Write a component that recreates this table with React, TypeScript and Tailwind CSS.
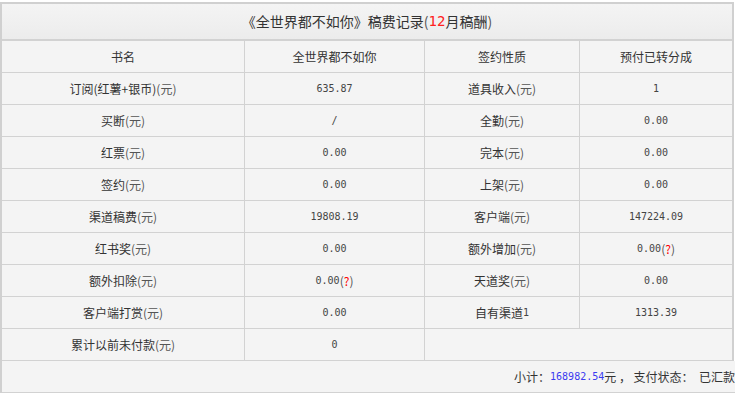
import React from 'react';

const cjk = '"Noto Sans CJK SC", "Microsoft YaHei", sans-serif';
const mono = '"DejaVu Sans Mono", "Liberation Mono", monospace';

type Cell = { text: React.ReactNode };

const Num: React.FC<{ children: React.ReactNode; blue?: boolean }> = ({ children, blue }) => (
  <span className={`text-[10px] ${blue ? 'text-[#3a3af0]' : 'text-[#444]'}`} style={{ fontFamily: mono }}>
    {children}
  </span>
);

const Yuan = () => <span className="text-[#555]">(元)</span>;
const Ask = () => (
  <span className="text-[#555]">
    (<span className="text-[#ff0000]">?</span>)
  </span>
);

const rows: Cell[][] = [
  [{ text: <>订阅(红薯+银币)<Yuan /></> }, { text: <Num>635.87</Num> }, { text: <>道具收入<Yuan /></> }, { text: <Num>1</Num> }],
  [{ text: <>买断<Yuan /></> }, { text: <Num>/</Num> }, { text: <>全勤<Yuan /></> }, { text: <Num>0.00</Num> }],
  [{ text: <>红票<Yuan /></> }, { text: <Num>0.00</Num> }, { text: <>完本<Yuan /></> }, { text: <Num>0.00</Num> }],
  [{ text: <>签约<Yuan /></> }, { text: <Num>0.00</Num> }, { text: <>上架<Yuan /></> }, { text: <Num>0.00</Num> }],
  [{ text: <>渠道稿费<Yuan /></> }, { text: <Num>19808.19</Num> }, { text: <>客户端<Yuan /></> }, { text: <Num>147224.09</Num> }],
  [{ text: <>红书奖<Yuan /></> }, { text: <Num>0.00</Num> }, { text: <>额外增加<Yuan /></> }, { text: <><Num>0.00</Num><Ask /></> }],
  [{ text: <>额外扣除<Yuan /></> }, { text: <><Num>0.00</Num><Ask /></> }, { text: <>天道奖<Yuan /></> }, { text: <Num>0.00</Num> }],
  [{ text: <>客户端打赏<Yuan /></> }, { text: <Num>0.00</Num> }, { text: <>自有渠道<Num>1</Num></> }, { text: <Num>1313.39</Num> }],
];

const cellCls = 'h-[32px] flex items-center justify-center border-b border-r border-[#d2d2d2] bg-[#f4f4f4]';

export default function App() {
  return (
    <div className="bg-white w-[735px] h-[396px] overflow-hidden pt-[2px]" style={{ fontFamily: cjk }}>
      <div className="w-[734px] border-l-2 border-t-2 border-r-2 border-[#d0d0d0] text-[12px] text-[#333]">
        {/* 标题 */}
        <div className="h-[37px] flex items-center justify-center border-b-2 border-[#d2d2d2] bg-gradient-to-b from-[#f4f4f4] to-[#ececec] text-[14px] text-[#333]">
          《全世界都不如你》稿费记录<span className="text-[#555]">(</span>
          <span className="text-[#ff2020]" style={{ fontFamily: mono }}>12</span>月稿酬<span className="text-[#555]">)</span>
        </div>

        <div className="grid grid-cols-[243px_180px_155px_1fr]">
          <div className={cellCls}>书名</div>
          <div className={cellCls}>全世界都不如你</div>
          <div className={cellCls}>签约性质</div>
          <div className={`${cellCls} border-r-0`}>预付已转分成</div>

          {rows.map((r, i) =>
            r.map((c, j) => (
              <div key={`${i}-${j}`} className={`${cellCls} ${j === 3 ? 'border-r-0' : ''}`}>
                {c.text}
              </div>
            ))
          )}

          <div className={cellCls}>累计以前未付款<Yuan /></div>
          <div className={cellCls}><Num>0</Num></div>
          <div className={`${cellCls} col-span-2 border-r-0`} />

          {/* 小计 */}
          <div className="col-span-4 h-[32px] flex items-center justify-end border-b border-[#d2d2d2] bg-[#f4f4f4] whitespace-nowrap overflow-hidden -mr-[3px]">
            小计：<Num blue>168982.54</Num>元 ， 支付状态：&nbsp; 已汇款
          </div>
        </div>
      </div>
    </div>
  );
}
